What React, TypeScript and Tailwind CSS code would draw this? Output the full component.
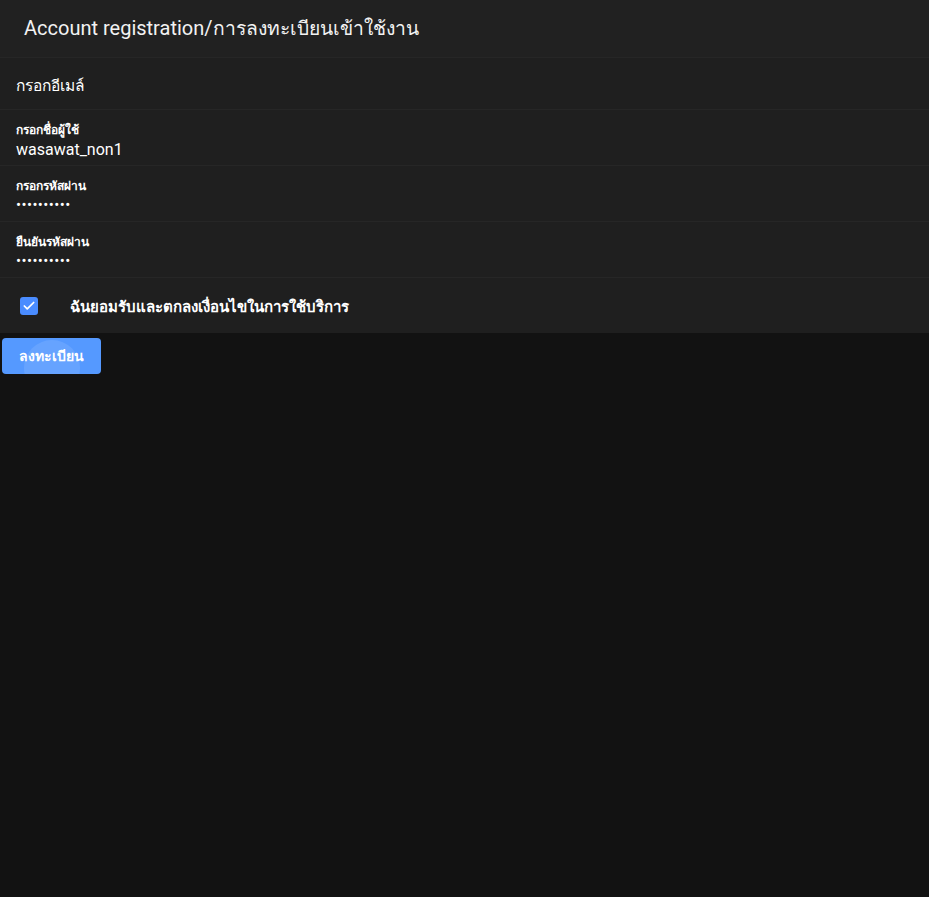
import { Check } from 'lucide-react'

const font = { fontFamily: 'Roboto, "Noto Sans", "DejaVu Sans", sans-serif' }

function Field({ label, value, dots }: { label: string; value: string; dots?: boolean }) {
  return (
    <div className="flex h-[56px] flex-col justify-center border-t border-[#262626] bg-[#1f1f1f] px-4 pt-[7px]">
      <div className="text-[12px] font-semibold leading-[16px] text-white">{label}</div>
      <div
        className={
          dots
            ? 'text-[15px] leading-[22px] tracking-[0.4px] text-white'
            : 'mt-[1px] text-[16px] leading-[22px] text-white'
        }
      >
        {value}
      </div>
    </div>
  )
}

export default function App() {
  return (
    <div className="min-h-[897px] w-full bg-[#121212]" style={font}>
      {/* header */}
      <div className="flex h-[57px] items-center bg-[#212121] px-6">
        <h1 className="text-[20px] font-normal text-[#f2f2f2]">
          Account registration/<span className="text-[19.3px]">การลงทะเบียนเข้าใช้งาน</span>
        </h1>
      </div>

      <div className="flex h-[52px] items-center border-t border-[#262626] bg-[#1f1f1f] px-4 pt-[6px]">
        <span className="text-[15.5px] font-medium text-white">กรอกอีเมล์</span>
      </div>
      <Field label="กรอกชื่อผู้ใช้" value="wasawat_non1" />
      <Field label="กรอกรหัสผ่าน" value="••••••••••" dots />
      <Field label="ยืนยันรหัสผ่าน" value="••••••••••" dots />

      <div className="flex h-[56px] items-center border-t border-[#262626] bg-[#1f1f1f] px-5">
        <div className="flex h-[18px] w-[18px] items-center justify-center rounded-[3px] bg-[#4a8cff]">
          <Check className="h-[14px] w-[14px] text-white" strokeWidth={3} />
        </div>
        <span className="ml-8 mt-[3px] text-[15px] font-semibold text-white">ฉันยอมรับและตกลงเงื่อนไขในการใช้บริการ</span>
      </div>

      <div className="px-[2px] pt-[5px]">
        <button className="relative flex h-[36px] w-[99px] items-center justify-center overflow-hidden rounded-[4px] bg-[#5599ff] text-[14px] font-bold text-white">
          <span className="absolute left-[22px] top-[2px] h-[56px] w-[56px] rounded-full bg-white/10" />
          <span className="relative">ลงทะเบียน</span>
        </button>
      </div>
    </div>
  )
}
